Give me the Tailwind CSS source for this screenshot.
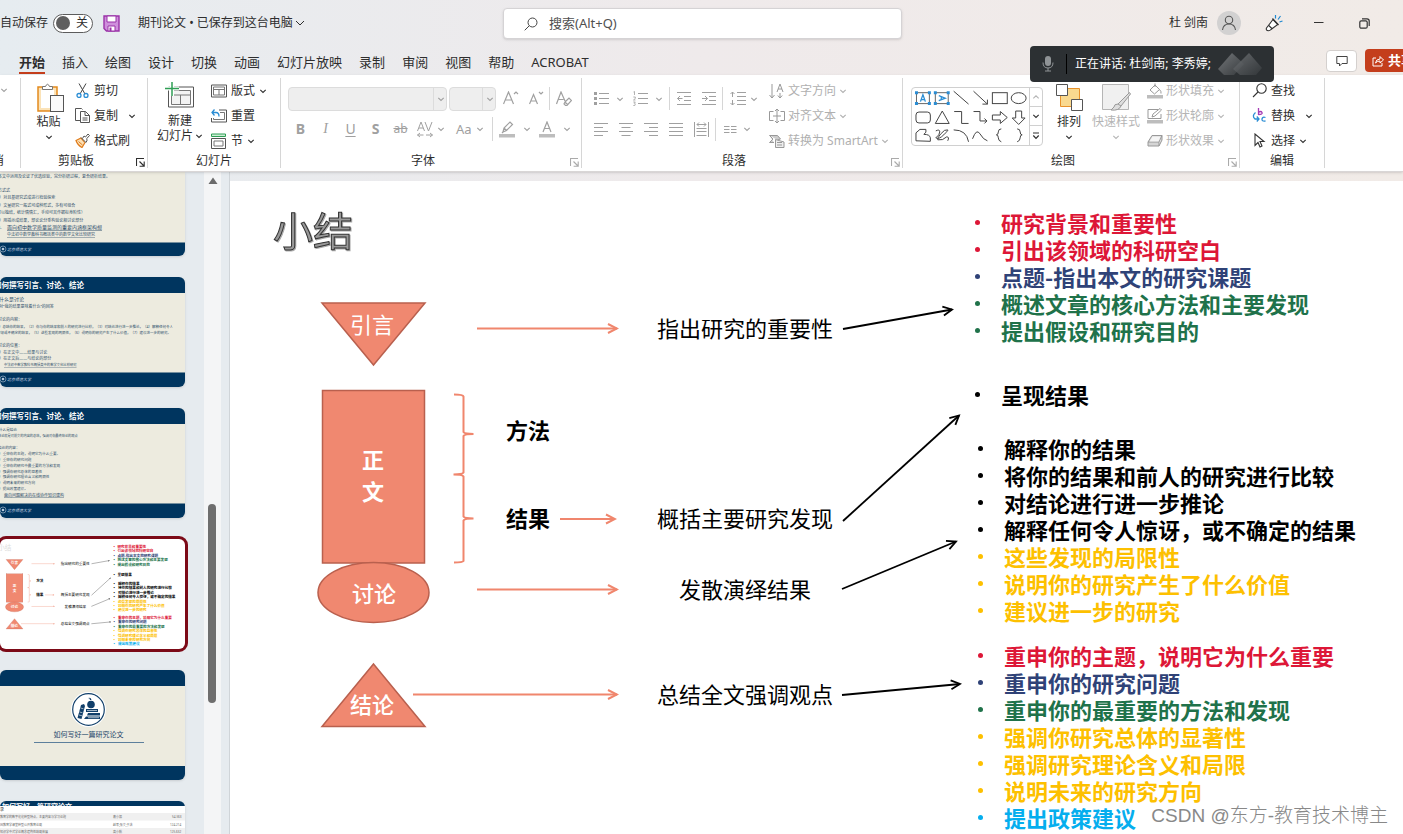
<!DOCTYPE html>
<html lang="zh-CN">
<head>
<meta charset="utf-8">
<meta name="viewport" content="width=device-width, initial-scale=1">
<title>期刊论文</title>
<script src="https://cdn.jsdelivr.net/npm/@tailwindcss/browser@4"></script>
</head>
<body class="h-screen overflow-hidden flex flex-col font-['Noto_Sans','Noto_Sans_CJK_SC',sans-serif] text-xs text-[#2e2e2e] bg-linear-to-r from-[#e6ecf0] via-[#efeaeb] to-[#f1ebe7]">

<!-- Shared symbols -->
<svg class="absolute size-0" aria-hidden="true">
  <symbol id="chev" viewBox="0 0 8 8"><path d="M1.300 2.800 4 5.400l2.700-2.600" fill="none" stroke="currentColor" stroke-width="1.100"/></symbol>
  <symbol id="launch" viewBox="0 0 9 9"><path d="M8 .5H.5V8M3.500 3.500 7.500 7.500M8.200 3.600v4.600H3.600" fill="none" stroke="currentColor" stroke-width="1.100"/></symbol>
  <marker id="head-o" viewBox="0 0 12 12" refX="10" refY="6" markerWidth="12" markerHeight="12" markerUnits="userSpaceOnUse" orient="auto"><path d="M1 1.500 10 6 1 10.500" fill="none" stroke="#f0866d" stroke-width="2"/></marker>
  <marker id="head-k" viewBox="0 0 12 12" refX="10" refY="6" markerWidth="12" markerHeight="12" markerUnits="userSpaceOnUse" orient="auto"><path d="M1 1.500 10 6 1 10.500" fill="none" stroke="#000" stroke-width="1.800"/></marker>
  <g id="diagram">
    <g fill="#f08870" stroke="#b9604e" stroke-width="1.500">
      <path d="M92 122H195L143.500 184Z"/>
      <rect x="92.500" y="209.500" width="102" height="172.500"/>
      <ellipse cx="143.500" cy="411.500" rx="55.500" ry="30"/>
      <path d="M143.500 483 195 545.500H92Z"/>
    </g>
    <g fill="none" stroke="#f0866d" stroke-width="2">
      <path d="M224 213.500q9 0 9.500 2V251q1 2 10 2-9 0-10 2v36.500q-1 2-10 2 9 0 10 2V335.500q1 2 10 2-9 0-10 2V380q-1 1.500-9.500 1.500"/>
      <g marker-end="url(#head-o)">
        <path d="M247 147.500H387"/><path d="M330 338H385"/><path d="M247 408.500H387"/><path d="M183 513.500H387"/>
      </g>
    </g>
    <g fill="none" stroke="#000" stroke-width="1.800" marker-end="url(#head-k)">
      <path d="M613 148 722 128.500"/><path d="M613 340 729 234.500"/><path d="M612 408 726 360.500"/><path d="M612 514 730 503"/>
    </g>
  </g>
  <symbol id="seal" viewBox="0 0 30 8"><circle cx="4" cy="4" r="3" fill="none" stroke="#b9cbdc" stroke-width=".6"/><circle cx="4" cy="4" r="1.300" fill="#b9cbdc"/></symbol>
</svg>

<!-- Title bar -->
<header class="shrink-0">
  <div class="h-[46px] flex items-center relative">
    <label class="flex items-center gap-[5px] cursor-pointer">
      <span>自动保存</span>
      <input type="checkbox" role="switch" class="sr-only">
      <span class="w-10 h-[19px] rounded-full border border-[#5c5c5c] bg-white flex items-center gap-1.5 pl-0.5"><span class="size-3.5 rounded-full bg-[#5f5f5f]"></span><span>关</span></span>
    </label>
    <button aria-label="保存" class="ml-2.5"><svg class="size-[17px]" viewBox="0 0 17 17"><path d="M1 1h15v15H3.500L1 13.500Z" fill="#cf8fdc" stroke="#9a32a8" stroke-width="1.400"/><path d="M4 1h9v6H4z" fill="#fff" stroke="#9a32a8"/><path d="M5 16v-5h7v5z" fill="#fff" stroke="#9a32a8"/><path d="M6.500 12.500h2V16h-2z" fill="#9a32a8"/></svg></button>
    <button class="ml-[18px] flex items-center gap-0.5">期刊论文 • 已保存到这台电脑<svg class="w-[10px] h-[10px]" viewBox="0 0 10 10"><path d="M1 3l4 4 4-4" fill="none" stroke="currentColor"/></svg></button>
    <div class="absolute left-[503px] top-2 w-[399px] h-[31px] bg-white rounded border border-[#d5d3d5] shadow-sm flex items-center pl-5 gap-[11px]">
      <svg class="size-[14px] shrink-0" viewBox="0 0 14 14"><g fill="none" stroke="#444"><circle cx="8.500" cy="5.500" r="4.500"/><path d="M5.200 8.800.700 13.300"/></g></svg>
      <input type="search" aria-label="搜索" placeholder="搜索(Alt+Q)" class="w-full bg-transparent outline-none text-[13px] placeholder:text-[#505050]">
    </div>
    <div class="ml-auto flex items-center">
      <span>杜 剑南</span>
      <button aria-label="帐户" class="ml-[9px] size-6 rounded-full bg-[#d2d1d1] grid place-items-center"><svg class="size-4" viewBox="0 0 16 16"><g fill="none" stroke="#555" stroke-width="1.100"><circle cx="8" cy="5" r="3.700"/><path d="M1.500 15c.5-4 3-6 6.500-6s6 2 6.500 6"/></g></svg></button>
      <button aria-label="即将推出的功能" class="ml-6"><svg class="size-[18px]" viewBox="0 0 18 18"><path d="M8 5.500 1.500 14q-1 2.500 2 2.700 1.500 0 2.500-1.200l6.800-5Z" fill="#fff" stroke="#333" stroke-width="1.100"/><path d="M3.700 11.500l3.500 3.200M7.500 4.500l6 6.500" fill="none" stroke="#333" stroke-width="1.200"/><path d="M10.500 4.500V1M13 5.500l2.500-3.500M14.500 8l3-1" stroke="#1e88d0" stroke-width="1.200"/></svg></button>
      <button aria-label="最小化" class="ml-[30px]"><svg class="size-[12px]" viewBox="0 0 12 12"><path d="M1 5.500h9.500" stroke="#333"/></svg></button>
      <button aria-label="还原" class="ml-[34px] mr-[33px]"><svg class="size-[11px]" viewBox="0 0 11 11"><g fill="none" stroke="#333" stroke-width="1.200"><rect x=".8" y="2.800" width="7.400" height="7.400" rx="1.500"/><path d="M3 .8h5Q10.200.8 10.200 3v5"/></g></svg></button>
    </div>
  </div>

  <nav class="h-[29px] flex items-center text-[13px] pl-[19px] relative" aria-label="功能区选项卡">
    <div class="flex gap-[17px] leading-5 pt-1">
      <a href="#" class="font-bold border-b-2 border-[#c43e1c] h-[22px]">开始</a>
      <a href="#">插入</a><a href="#">绘图</a><a href="#">设计</a><a href="#">切换</a><a href="#">动画</a><a href="#">幻灯片放映</a><a href="#">录制</a><a href="#">审阅</a><a href="#">视图</a><a href="#">帮助</a><a href="#">ACROBAT</a>
    </div>
    <div class="ml-auto flex gap-2 items-center">
      <button aria-label="批注" class="w-[31px] h-[22px] rounded bg-white border border-[#d4d0ce] grid place-items-center"><svg class="size-3" viewBox="0 0 12 12"><path d="M.8 1.500h10.400v7H6L3.500 11V8.500H.8Z" fill="none" stroke="#444"/></svg></button>
      <button class="w-[38px] h-[23px] rounded-l bg-[#c43e1c] text-white font-bold flex items-center gap-1 pl-[7px] overflow-hidden whitespace-nowrap"><svg class="size-3 shrink-0" viewBox="0 0 12 12"><path d="M4 3H1v8h9V8M3.500 8q.5-4 4.500-4V1.500L11.500 5 8 8V6Q5 6 3.500 8Z" fill="none" stroke="#fff"/></svg>共享</button>
    </div>
    <!-- Meeting speaker banner -->
    <div class="absolute z-10 left-[1030px] top-0 w-[244px] h-9 rounded bg-[#2c3033] text-white text-xs flex items-center">
      <svg class="w-3 h-4 ml-3" viewBox="0 0 12 16"><rect x="3" y="0" width="6" height="10" rx="3" fill="#8f9396"/><path d="M1 6.500q0 5.500 5 5.500t5-5.500M6 12v3M3 15h6" fill="none" stroke="#8f9396"/></svg>
      <span class="w-px h-5 bg-black ml-3 mr-2"></span>
      <span>正在讲话: 杜剑南; 李秀婷;</span>
      <svg class="absolute right-3 top-1.5 w-[44px] h-6" viewBox="0 0 44 24"><defs><linearGradient id="wm" x1="0" y1="0" x2="1" y2="1"><stop offset="0" stop-color="#75787b"/><stop offset="1" stop-color="#34383b"/></linearGradient></defs><g fill="url(#wm)"><path d="M14 1 26 12 16 23H6L0 17Z"/><path d="M31 1 44 16 38 23H22L15 17Z" opacity=".8"/></g></svg>
    </div>
  </nav>
</header>

<!-- Ribbon -->
<section aria-label="功能区" class="shrink-0 h-[97px] pt-[3px] bg-white flex shadow-sm border-b border-[#d9d6d6] overflow-hidden relative z-[1]">
  <div class="w-[21px] shrink-0 h-[90px] border-r border-[#d6d6d6] flex flex-col justify-between overflow-hidden">
    <svg class="size-2 text-[#a0a0a0] mt-2"><use href="#chev"/></svg>
    <span class="leading-[15px] w-1 flex justify-end whitespace-nowrap">撤消</span>
  </div>

  <div class="w-[127px] shrink-0 h-[90px] border-r border-[#d6d6d6] flex flex-col">
    <div class="flex h-[75px]">
      <button class="ml-1 w-[47px] flex flex-col items-center pt-[5px]">
        <svg class="w-[27px] h-[30px] ml-1" viewBox="0 0 27 30"><path d="M1 4h19v24H1z" fill="#fbe3b8" stroke="#e38b1e" stroke-width="1.500"/><path d="M4 7h13v18H4z" fill="#fff"/><path d="M5.500 6.500V3.500h3Q10.500-1 12.500 3.500h3v3z" fill="#fff" stroke="#777"/><rect x="13.500" y="12.500" width="13" height="16" fill="#fafafa" stroke="#555"/></svg>
        <span class="leading-[18px]">粘贴</span><svg class="size-2 mt-0.5"><use href="#chev"/></svg>
      </button>
      <div class="ml-[3px] grid grid-rows-3">
        <button class="flex items-center gap-1"><svg class="size-[15px]" viewBox="0 0 15 15"><path d="M4 .5 10 11M11 .5 5 11" stroke="#444"/><g fill="none" stroke="#2a8dd4" stroke-width="1.300"><circle cx="4" cy="12.500" r="2"/><circle cx="11" cy="12.500" r="2"/></g></svg>剪切</button>
        <button class="flex items-center gap-1"><svg class="size-[15px]" viewBox="0 0 15 15"><g fill="#fff" stroke="#555"><path d="M5 12.500H.5V.5h6l1 1"/><path d="M5.500 3.500h5l4 4v7h-9z"/><path d="M10 3.500v4h4.500M7.500 10h5M7.500 12h5" fill="none"/></g></svg>复制<svg class="size-2 ml-1.5"><use href="#chev"/></svg></button>
        <button class="flex items-center gap-1"><svg class="size-[15px]" viewBox="0 0 15 15"><path d="M1 7.500 6 5l4 4.500-3 5Q2.500 12 1 7.500Z" fill="#fbe0b5" stroke="#e07b1a" stroke-width="1.200"/><path d="M3.500 8.500 7.500 12" stroke="#e07b1a"/><path d="m6 4.500 5 5M7.500 5.500 9 3l1.500 1L13 1l1.500 1.500-2.700 3L12 8l-1.500 1.500" fill="#fff" stroke="#555"/></svg>格式刷</button>
      </div>
    </div>
    <div class="relative h-[15px] leading-[15px] text-center pr-4">剪贴板<button aria-label="剪贴板设置" class="absolute right-0.5 top-[5px]"><svg class="size-[9px] block"><use href="#launch"/></svg></button></div>
  </div>

  <div class="w-[133px] shrink-0 h-[90px] border-r border-[#d6d6d6] flex flex-col">
    <div class="flex h-[75px]">
      <button class="ml-[9px] w-[46px] flex flex-col items-center pt-1 leading-[15px]">
        <svg class="w-[30px] h-[27px] mb-1" viewBox="0 0 30 27"><path d="M3.500 5h25v20h-25z" fill="#fff" stroke="#555"/><path d="M6.500 8.500h19v14h-19zM6.500 13h19M15.500 13v9.500" fill="#f3f3f3" stroke="#777"/><path d="M0 6.500h14M7 0v14" stroke="#fff" stroke-width="4"/><path d="M0 6.500h14M7 0v14" stroke="#2f9e55" stroke-width="1.500"/></svg>
        <span>新建</span><span class="flex items-center whitespace-nowrap">幻灯片<svg class="size-2 ml-0.5"><use href="#chev"/></svg></span>
      </button>
      <div class="ml-2 grid grid-rows-3">
        <button class="flex items-center gap-1"><svg class="w-4 h-[14px]" viewBox="0 0 16 14"><g fill="none" stroke="#555"><path d="M.5 1h15v12H.5z"/><path d="M2.500 3h11v8h-11zM2.500 5.500h11M8 5.500V11" stroke="#777"/></g></svg>版式<svg class="size-2"><use href="#chev"/></svg></button>
        <button class="flex items-center gap-1"><svg class="w-4 h-[14px]" viewBox="0 0 16 14"><g fill="none" stroke="#555"><path d="M8 1h7.500v12H.5V9"/><path d="M9 3.500h4.500v7h-11V9" stroke="#777"/></g><path d="M3.500.5 1 3.500l2.500 3M1 3.500h4q3 0 3 4" fill="none" stroke="#2a8dd4" stroke-width="1.300"/></svg>重置</button>
        <button class="flex items-center gap-1"><svg class="w-4 h-4" viewBox="0 0 16 16"><path d="M.5 1h14v2.500H.5z" fill="#cdeed6" stroke="#2f9e55"/><g fill="none" stroke="#555"><path d="M.5 5.500h14v10H.500z"/><path d="M3 8h9v5H3z" stroke="#777"/></g></svg>节<svg class="size-2"><use href="#chev"/></svg></button>
      </div>
    </div>
    <div class="h-[15px] leading-[15px] text-center">幻灯片</div>
  </div>

  <div class="w-[301px] shrink-0 h-[90px] border-r border-[#d6d6d6] flex flex-col text-[#a0a0a0]">
    <div class="h-[75px] pl-[7px] pt-[9px]">
      <div class="flex items-center h-[23px]">
        <span class="relative flex"><select aria-label="字体" disabled class="appearance-none w-[159px] h-6 bg-[#eee] border border-[#dcdcdc] rounded"><option></option></select><span class="absolute right-0 inset-y-0 w-3.5 border-l border-[#dcdcdc] grid place-items-center pointer-events-none"><svg class="size-2"><use href="#chev"/></svg></span></span>
        <span class="relative flex ml-0.5"><select aria-label="字号" disabled class="appearance-none w-[47px] h-6 bg-[#eee] border border-[#dcdcdc] rounded"><option></option></select><span class="absolute right-0 inset-y-0 w-3.5 border-l border-[#dcdcdc] grid place-items-center pointer-events-none"><svg class="size-2"><use href="#chev"/></svg></span></span>
        <button disabled aria-label="增大字号" class="ml-[7px]"><svg class="w-4 h-4 block" viewBox="0 0 16 16"><path d="M.5 13 5.500 1l5 12M2.500 9h6M11 3l2-2 2 2" fill="none" stroke="currentColor" stroke-width="1.200"/></svg></button>
        <button disabled aria-label="减小字号" class="ml-2.5"><svg class="w-4 h-4 block" viewBox="0 0 16 16"><path d="M.5 13 4.500 3.500l4 9.500M2 10h5M10 1l2 2 2-2" fill="none" stroke="currentColor" stroke-width="1.200"/></svg></button>
        <span class="w-px h-[23px] bg-[#d6d6d6] ml-1"></span>
        <button disabled aria-label="清除格式" class="ml-1.5"><svg class="w-4 h-4 block" viewBox="0 0 16 16"><path d="M.5 13 5 1l4 9M2.500 8.500h5M9 11l4-4 2.500 2.500-4.500 5H9.500L8 13ZM9 11l3 3" fill="none" stroke="currentColor" stroke-width="1.200"/></svg></button>
      </div>
      <div class="flex items-center h-6 mt-[7px] text-sm leading-none">
        <button disabled class="w-[25px] font-bold">B</button>
        <button disabled class="w-[25px] italic font-['Liberation_Serif',serif]">I</button>
        <button disabled class="w-[25px] underline underline-offset-2">U</button>
        <button disabled class="w-[25px] font-bold">S</button>
        <button disabled class="w-[25px] text-xs line-through">ab</button>
        <button disabled aria-label="字符间距" class="w-[35px] flex items-center gap-1 pl-1"><svg class="w-4 h-[17px]" viewBox="0 0 16 17"><path d="M.5 10 4 1l3.500 9M2 7h4M8 1l3.500 9L15 1M.5 14h6M9 14h6.500M3 12l-2.500 2L3 16M13 12l2.500 2L13 16" fill="none" stroke="currentColor"/></svg><svg class="size-2"><use href="#chev"/></svg></button>
        <button disabled class="flex items-center gap-1 text-[13px] ml-2">Aa<svg class="size-2"><use href="#chev"/></svg></button>
        <span class="w-px h-6 bg-[#d6d6d6] ml-2"></span>
        <button disabled aria-label="文本突出显示颜色" class="flex items-center gap-2 ml-1.5"><svg class="w-4 h-[17px]" viewBox="0 0 16 17"><path d="M4 11l1-4 6-6 2.500 2.500-6 6ZM4 11l-1 1M5 7l2.500 2.500" fill="none" stroke="currentColor" stroke-width="1.200"/><path d="M0 13h16v3.500H0z" fill="#bdbdbd"/></svg><svg class="size-2"><use href="#chev"/></svg></button>
        <button disabled aria-label="字体颜色" class="flex items-center gap-2 ml-2"><svg class="w-4 h-[17px]" viewBox="0 0 16 17"><path d="M4 11 8 1l4 10M5.500 7.500h5" fill="none" stroke="currentColor" stroke-width="1.200"/><path d="M0 13h16v3.500H0z" fill="#bdbdbd"/></svg><svg class="size-2"><use href="#chev"/></svg></button>
      </div>
    </div>
    <div class="relative h-[15px] leading-[15px] text-center pr-4 text-[#2e2e2e]">字体<button aria-label="字体设置" class="absolute right-0.5 top-[5px] text-[#aaa]"><svg class="size-[9px] block"><use href="#launch"/></svg></button></div>
  </div>

  <div class="w-[321px] shrink-0 h-[90px] border-r border-[#d6d6d6] flex flex-col text-[#a0a0a0]">
    <div class="flex h-[75px]">
      <div class="w-[176px] pl-3 pt-[9px]">
        <div class="flex items-center h-[23px]">
          <button disabled aria-label="项目符号" class="flex items-center gap-1.5"><svg class="w-4 h-[15px]" viewBox="0 0 16 15"><path d="M0 1h3v3H0zM0 6h3v3H0zM0 11h3v3H0z" fill="currentColor"/><path d="M5 2.500h10M5 7.500h10M5 12.500h10" stroke="currentColor"/></svg><svg class="size-2"><use href="#chev"/></svg></button>
          <button disabled aria-label="编号" class="flex items-center gap-1.5 ml-[9px]"><svg class="w-4 h-[15px]" viewBox="0 0 16 15"><path d="M.5 1 1.500.5v3.500M.3 6h2v1.500L.5 9h2M.3 11h2l-1 1.300 1 .5-.5 1.700H.3" fill="none" stroke="currentColor" stroke-width=".8"/><path d="M5 2.500h10M5 7.500h10M5 12.500h10" stroke="currentColor"/></svg><svg class="size-2"><use href="#chev"/></svg></button>
          <span class="w-px h-[23px] bg-[#d6d6d6] ml-1.5"></span>
          <button disabled aria-label="减少缩进" class="ml-[7px]"><svg class="w-[14px] h-[15px] block" viewBox="0 0 14 15"><path d="M0 1.500h14M7 5.500h7M7 9.500h7M0 13.500h14M5.500 7.500H.5M3 5 .5 7.500 3 10" fill="none" stroke="currentColor"/></svg></button>
          <button disabled aria-label="增加缩进" class="ml-[11px]"><svg class="w-[14px] h-[15px] block" viewBox="0 0 14 15"><path d="M0 1.500h14M7 5.500h7M7 9.500h7M0 13.500h14M0 7.500h5.500M3 5l2.500 2.500L3 10" fill="none" stroke="currentColor"/></svg></button>
          <span class="w-px h-[23px] bg-[#d6d6d6] ml-1.5"></span>
          <button disabled aria-label="行距" class="flex items-center gap-1 ml-[7px]"><svg class="w-4 h-[15px]" viewBox="0 0 16 15"><path d="M2.500 1v5M2.500 9v5M.5 3l2-2 2 2M.5 12l2 2 2-2M7 1.500h9M7 5.500h9M7 9.500h9M7 13.500h9" fill="none" stroke="currentColor"/></svg><svg class="size-2"><use href="#chev"/></svg></button>
        </div>
        <div class="flex items-center h-6 mt-[7px]">
          <button disabled aria-label="左对齐"><svg class="w-[14px] h-[15px] block" viewBox="0 0 14 15"><path d="M0 1.500h14M0 5.500h9M0 9.500h14M0 13.500h9" stroke="currentColor"/></svg></button>
          <button disabled aria-label="居中" class="ml-[11px]"><svg class="w-[14px] h-[15px] block" viewBox="0 0 14 15"><path d="M0 1.500h14M2.500 5.500h9M0 9.500h14M2.500 13.500h9" stroke="currentColor"/></svg></button>
          <button disabled aria-label="右对齐" class="ml-[11px]"><svg class="w-[14px] h-[15px] block" viewBox="0 0 14 15"><path d="M0 1.500h14M5 5.500h9M0 9.500h14M5 13.500h9" stroke="currentColor"/></svg></button>
          <button disabled aria-label="两端对齐" class="ml-[11px]"><svg class="w-[14px] h-[15px] block" viewBox="0 0 14 15"><path d="M0 1.500h14M0 5.500h14M0 9.500h14M0 13.500h14" stroke="currentColor"/></svg></button>
          <button disabled aria-label="分散对齐" class="ml-[11px]"><svg class="w-[15px] h-[15px] block" viewBox="0 0 15 15"><path d="M.5 0v15M14.500 0v15M2.500 6.500h10M2.500 9.500h10M2.500 13.500h10M3 2.500h9M5 .5l-2 2 2 2M10 .5l2 2-2 2" fill="none" stroke="currentColor"/></svg></button>
          <span class="w-px h-[23px] bg-[#d6d6d6] ml-1.5"></span>
          <button disabled aria-label="分栏" class="flex items-center gap-1.5 ml-2"><svg class="w-[13px] h-[9px]" viewBox="0 0 13 9"><path d="M0 1.500h5.500M7 1.500h5.500M0 4.500h5.500M7 4.500h5.500M0 7.500h5.500M7 7.500h5.500" stroke="currentColor"/></svg><svg class="size-2"><use href="#chev"/></svg></button>
        </div>
      </div>
      <div class="ml-[11px] grid grid-rows-3 text-[#b0b0b0]">
        <button disabled class="flex items-center gap-[3px]"><svg class="w-4 h-4 text-[#999]" viewBox="0 0 16 16"><path d="M3 1v14M.5 12 3 15l2.500-3M11 10v5M8.800 12.500 11 15l2.200-2.500M8 9l3-8 3 8M9 6h4" fill="none" stroke="currentColor"/></svg>文字方向<svg class="size-2"><use href="#chev"/></svg></button>
        <button disabled class="flex items-center gap-[3px]"><svg class="w-4 h-4 text-[#999]" viewBox="0 0 16 16"><path d="M4.500 3.500H.5v9h4M11.500 3.500h4v9h-4M8 1v14M6 3l2-2 2 2M6 13l2 2 2-2M4 8h8" fill="none" stroke="currentColor"/></svg>对齐文本<svg class="size-2"><use href="#chev"/></svg></button>
        <button disabled class="flex items-center gap-[3px] whitespace-nowrap"><svg class="w-4 h-4 text-[#999]" viewBox="0 0 16 16"><path d="M.5 2.500h8l3 3.500-3 1M.5 2.500 4 6 .5 9.500H5" fill="#ccc" stroke="currentColor"/><path d="M6.500 6.500 15 9v5.500H6.500zM8 9.500h5M8 12h5" fill="#eee" stroke="currentColor"/></svg>转换为 SmartArt<svg class="size-2"><use href="#chev"/></svg></button>
      </div>
    </div>
    <div class="relative h-[15px] leading-[15px] text-center pr-4 text-[#2e2e2e]">段落<button aria-label="段落设置" class="absolute right-0.5 top-[5px] text-[#aaa]"><svg class="size-[9px] block"><use href="#launch"/></svg></button></div>
  </div>

  <div class="w-[337px] shrink-0 h-[90px] border-r border-[#d6d6d6] flex flex-col">
    <div class="flex h-[75px]">
      <div class="ml-2 mt-[9px] w-[132px] h-[59px] rounded border border-[#d0d0d0] flex shrink-0">
        <svg class="w-[118px] h-[57px]" viewBox="0 0 118 57" role="img" aria-label="形状">
          <g fill="none" stroke="#444">
            <rect x="4.500" y="4.500" width="13" height="11" stroke="#666"/><rect x="23.500" y="4.500" width="13" height="11" stroke="#666"/>
            <path d="M42 3l15 13M62 3l14 13M76 11.500V16h-5"/><rect x="81" y="4.500" width="15" height="11"/><ellipse cx="107.500" cy="10" rx="7.500" ry="5.500"/>
            <rect x="4" y="24" width="14.500" height="11" rx="3"/><path d="M23.500 35.500 30.500 23l7 12.500Z"/><path d="M42.500 23.500H50v12h7"/><path d="M62 23.500h6.500v9.500h7M73 30.500l2.500 2.500-2.500 2.500"/>
            <path d="M81 27h8v-3.500l7 6-7 6V32h-8z"/><path d="M104.500 23h6v7h3.500l-6.500 6.500-6.500-6.500h3.500z"/>
            <path d="M4 53V45l4-3.500h6q1 3-2 5 6 0 6.500 3.500V53.500Z"/><path d="M24 43q4-2 4 1t-4 6q3 2 8-3t4-5q-3-1-7 4t-3 6q5 1 9-3 3 0 1 4"/><path d="M42 42q13 0 15 12"/><path d="M61 51q4-11 7.500-5t7.500 7"/>
            <path d="M90 41q-3 0-3 3t-2 3q2 0 2 3t3 4M106 41q3 0 3 3t2 3q-2 0-2 3t-3 4"/>
          </g>
          <g fill="none" stroke="#2a8dd4" stroke-width="1.300"><path d="M8.500 13.500 11 6.500l2.500 7M9.500 11.500h3"/><path d="M27 7.500l6.500 2.500-6.500 2.500M29.500 8.500v3"/></g>
          <g fill="#2a8dd4"><path d="M3 3h3v3H3zM16 3h3v3h-3zM3 14h3v3H3zM16 14h3v3h-3zM22 3h3v3h-3zM35 3h3v3h-3zM22 14h3v3h-3zM35 14h3v3h-3z"/></g>
        </svg>
        <div class="w-[13px] border-l border-[#d0d0d0] grid grid-rows-3 divide-y divide-[#d0d0d0]">
          <button aria-label="上一行" class="grid place-items-center text-[#b5b5b5]"><svg class="size-2" viewBox="0 0 8 8"><path d="M1.300 5.400 4 2.800l2.700 2.600" fill="none" stroke="currentColor" stroke-width="1.100"/></svg></button>
          <button aria-label="下一行" class="grid place-items-center"><svg class="size-2"><use href="#chev"/></svg></button>
          <button aria-label="其他" class="grid place-items-center"><svg class="size-2" viewBox="0 0 8 8"><path d="M1 1h6M1.300 3.500 4 6.300l2.700-2.800" fill="none" stroke="currentColor" stroke-width="1.200"/></svg></button>
        </div>
      </div>
      <button class="ml-3 w-7 flex flex-col items-center pt-1.5 shrink-0"><svg class="w-[27px] h-[27px]" viewBox="0 0 27 27"><path d="M4.500 4.500h19v18h-19z" fill="#f9d98f" stroke="#e8912a"/><path d="M.5.5h11v11H.500zM15.500 15.500h11v11h-11z" fill="#fff" stroke="#555"/></svg><span class="leading-[22px] whitespace-nowrap">排列</span><svg class="size-2"><use href="#chev"/></svg></button>
      <button disabled class="ml-2 w-[50px] flex flex-col items-center pt-1.5 text-[#b5b5b5] shrink-0"><svg class="w-[29px] h-[27px]" viewBox="0 0 29 27"><path d="M.5.5h26v25H.500z" fill="#f0f0f0" stroke="#b5b5b5"/><path d="M28.500 10 19 22l-3-2L27.500 8.500ZM16 20q-4 0-4 3l-3 3q8 1 10-4" fill="#ddd" stroke="#999"/></svg><span class="leading-[22px] whitespace-nowrap">快速样式</span><svg class="size-2"><use href="#chev"/></svg></button>
      <div class="ml-1.5 grid grid-rows-3 text-[#b5b5b5]">
        <button disabled class="flex items-center gap-[3px]"><svg class="w-4 h-4" viewBox="0 0 16 16"><path d="M3 7l5-5 4.500 4.500-5 4.500ZM8 4V.5M12.500 6.500q2 2 1.500 4" fill="#fff" stroke="#999"/><path d="M0 12h16v3.500H0z" fill="#bdbdbd"/></svg>形状填充<svg class="size-2"><use href="#chev"/></svg></button>
        <button disabled class="flex items-center gap-[3px]"><svg class="w-4 h-4" viewBox="0 0 16 16"><path d="M11 1.500H1v9h13V6M5 9l1-3 7-5.500L14.500 2 8 8Z" fill="none" stroke="#999"/><path d="M0 12h16v3.500H0z" fill="#bdbdbd"/></svg>形状轮廓<svg class="size-2"><use href="#chev"/></svg></button>
        <button disabled class="flex items-center gap-[3px]"><svg class="w-4 h-4" viewBox="0 0 16 16"><path d="M1 9 5 2.500h10L12 9ZM1 9v4h11V9M12 13l3-6V2.500" fill="#d5d5d5" stroke="#999"/><path d="M2.500 8.500 5.500 3.500h8L11.500 8.500Z" fill="#f5f5f5"/></svg>形状效果<svg class="size-2"><use href="#chev"/></svg></button>
      </div>
    </div>
    <div class="relative h-[15px] leading-[15px] text-center pr-4">绘图<button aria-label="绘图设置" class="absolute right-0.5 top-[5px] text-[#aaa]"><svg class="size-[9px] block"><use href="#launch"/></svg></button></div>
  </div>

  <div class="w-[85px] shrink-0 h-[90px] border-r border-[#d6d6d6] flex flex-col">
    <div class="grid grid-rows-3 h-[75px] pl-3 justify-start">
      <button class="flex items-center gap-1"><svg class="size-[15px]" viewBox="0 0 15 15"><g fill="none" stroke="#333" stroke-width="1.100"><circle cx="9.500" cy="5.500" r="4.700"/><path d="M6 9 1 14"/></g></svg>查找</button>
      <button class="flex items-center gap-1"><svg class="size-[15px]" viewBox="0 0 15 15"><g fill="none" stroke-width="1.300"><path d="M6.500 0v7M6.500 4.500q2.500-2 3.500 0t-3.500 2" stroke="#a53bb5"/><path d="M3.500 4.500Q-.5 8 3 11l4 0M4.800 8.500 7 11l-2.200 2.500M13.500 9.500q-3-1-3.500 1.500t3.500 2" stroke="#2a8dd4"/></g></svg>替换<svg class="size-2 ml-1.5"><use href="#chev"/></svg></button>
      <button class="flex items-center gap-1"><svg class="size-[15px]" viewBox="0 0 15 15"><path d="M3 1v11.500l3-3 2 4.500 2-1-2-4.500h4Z" fill="#fff" stroke="#333" stroke-width="1.100"/></svg>选择<svg class="size-2"><use href="#chev"/></svg></button>
    </div>
    <div class="h-[15px] leading-[15px] text-center">编辑</div>
  </div>
</section>

<!-- Workspace -->
<main class="flex-1 min-h-0 flex">
  <aside aria-label="幻灯片缩略图" class="w-[204px] shrink-0 bg-[#e6ebef] overflow-hidden">
    <ol class="w-[185px] flex flex-col gap-[21px]">
      <li class="h-[84px] rounded-b-md shadow overflow-hidden bg-[#edebdf]">
        <svg class="w-full h-full block" viewBox="0 0 185 84" font-size="4" fill="#2f4f6b">
          <text x="-2" y="6">本文中运用及论证了优选经验，完分析研过程，复合研析结果。</text>
          <text x="-2" y="20">方式式</text><text x="-3" y="27">1）对且基研究式成进行检验探索</text><text x="-3" y="34.500">2）文量研究一般式可成种形式，多有可组合</text><text x="-3" y="42">可以独结，统计情情汇，手动可其作据标身阶性）</text><text x="-3" y="49.500">3）用插示成结果，部论论分重构验论相讨论部分</text>
          <text x="-2" y="57">4、</text><text x="7" y="57" font-size="5" text-decoration="underline">面向初中数学质量监测的重要内涵框架构想</text><text x="7" y="64" text-decoration="underline">中法初中数学教科书概括类中的数学文化比较研究</text>
          <path d="M0 70.500h185V84H0z" fill="#00355f"/><use href="#seal" x="-1" y="73" width="30" height="8"/><text x="7" y="79" fill="#cddae6" font-size="4" font-style="italic">北京师范大学</text>
        </svg>
      </li>
      <li class="h-[110px] rounded-md shadow overflow-hidden bg-[#edebdf]">
        <svg class="w-full h-full block" viewBox="0 0 185 110" font-size="4" fill="#2f4f6b">
          <path d="M0 0h185v16H0zM0 95.500h185V110H0z" fill="#00355f"/>
          <text x="-6" y="10.800" font-size="7.500" font-weight="bold" fill="#fff">如何撰写引言、讨论、结论</text>
          <text x="-1" y="24" font-size="5">什么是讨论</text><text x="-1" y="31">对“我的结果意味着什么”的回答</text>
          <text x="-2" y="44">讨论的内容：</text><text x="-3" y="50.500" font-size="3.500">1）总结你的结果，（2）你与你的结果和前人的研究进行比较，（3）对结论进行进一步推论，（4）解释任何令人</text><text x="-3" y="57" font-size="3.500">惊讶或不确定的结果，（5）这些发现的局限性，（6）说明你的研究产生了什么价值，（7）建议进一步的研究。</text>
          <text x="-2" y="70">讨论的位置：</text><text x="-3" y="76.500">1）在正文中——结果与讨论</text><text x="-3" y="82.500">2）在正文后——与结论的部分</text><text x="4" y="89" font-size="3.300" text-decoration="underline">中法初中数学教科书概括类中的数学文化比较研究</text>
          <use href="#seal" x="-1" y="98" width="30" height="8"/><text x="7" y="104" fill="#cddae6" font-size="4" font-style="italic">北京师范大学</text>
        </svg>
      </li>
      <li class="h-[110px] rounded-md shadow overflow-hidden bg-[#edebdf]">
        <svg class="w-full h-full block" viewBox="0 0 185 110" font-size="3.600" fill="#2f4f6b">
          <path d="M0 0h185v16H0zM0 95.500h185V110H0z" fill="#00355f"/>
          <text x="-6" y="10.800" font-size="7.500" font-weight="bold" fill="#fff">如何撰写引言、讨论、结论</text>
          <text x="-1" y="23">什么是结论</text><text x="-2" y="29" font-size="3.200">结论就是对前文的内容的总结，强调对你最终结论的观点</text>
          <text x="-2" y="41">结论的内容：</text><text x="-3" y="47">1）重申你的主题，说明它为什么重要。</text><text x="-3" y="52.500">2）重申你的研究问题</text><text x="-3" y="58.500">3）重申你的研究中最重要的方法和发现</text><text x="-3" y="64.500">4）强调你研究总体的显著性</text><text x="-3" y="70">5）强调你研究理论含义和局限性</text><text x="-3" y="76">6）说明未来的研究方向</text><text x="-3" y="82">7）提出政策建议。</text><text x="4" y="88.500" font-size="4" text-decoration="underline">面向问题解决的在线协作知识建构</text>
          <use href="#seal" x="-1" y="98" width="30" height="8"/><text x="7" y="104" fill="#cddae6" font-size="4" font-style="italic">北京师范大学</text>
        </svg>
      </li>
      <li aria-current="true" class="h-[110px] rounded-md overflow-hidden bg-white ring-3 ring-[#7c0a17]">
        <svg class="w-full h-full block" viewBox="55 -3 1128 671" preserveAspectRatio="none" font-size="22">
          <use href="#diagram"/>
          <text x="44" y="63" font-size="40" fill="#ddd">小结</text>
          <g fill="#fff" font-weight="bold"><text x="121" y="152">引言</text><text x="132" y="288">正</text><text x="132" y="320">文</text><text x="121" y="420">讨论</text><text x="120" y="532">结论</text></g>
          <text x="426" y="156">指出研究的重要性</text><text x="426" y="346">概括主要研究发现</text><text x="449" y="416">发散演绎结果</text><text x="426" y="522">总结全文强调观点</text>
          <g font-weight="bold"><text x="276" y="258">方法</text><text x="276" y="346">结果</text>
            <g fill="#dd1737"><text x="747" y="52">•</text><text x="771" y="52">研究背景和重要性</text><text x="747" y="79">•</text><text x="771" y="79">引出该领域的科研空白</text><text x="747" y="486">•</text><text x="774" y="486">重申你的主题，说明它为什么重要</text></g>
            <g fill="#2f4277"><text x="747" y="105">•</text><text x="771" y="105">点题-指出本文的研究课题</text><text x="747" y="512">•</text><text x="774" y="512">重申你的研究问题</text></g>
            <g fill="#20724a"><text x="747" y="132">•</text><text x="771" y="132">概述文章的核心方法和主要发现</text><text x="747" y="159">•</text><text x="771" y="159">提出假设和研究目的</text><text x="747" y="539">•</text><text x="774" y="539">重申你的最重要的方法和发现</text></g>
            <text x="747" y="223">•</text><text x="771" y="223">呈现结果</text><text x="747" y="278">•</text><text x="774" y="278">解释你的结果</text><text x="747" y="305">•</text><text x="774" y="305">将你的结果和前人的研究进行比较</text><text x="747" y="332">•</text><text x="774" y="332">对结论进行进一步推论</text><text x="747" y="358">•</text><text x="774" y="358">解释任何令人惊讶，或不确定的结果</text>
            <g fill="#fdc000"><text x="747" y="385">•</text><text x="774" y="385">这些发现的局限性</text><text x="747" y="411">•</text><text x="774" y="411">说明你的研究产生了什么价值</text><text x="747" y="438">•</text><text x="774" y="438">建议进一步的研究</text><text x="747" y="566">•</text><text x="774" y="566">强调你研究总体的显著性</text><text x="747" y="592">•</text><text x="774" y="592">强调研究理论含义和局限</text><text x="747" y="619">•</text><text x="774" y="619">说明未来的研究方向</text></g>
            <g fill="#05aeee"><text x="747" y="646">•</text><text x="774" y="646">提出政策建议</text></g>
          </g>
        </svg>
      </li>
      <li class="h-[110px] rounded-md shadow overflow-hidden bg-[#edebdf] flex flex-col items-center justify-between">
        <span class="block w-full h-4 shrink-0 bg-[#00355f]"></span>
        <div class="flex-1 w-full flex flex-col items-center pt-1.5 pr-2 text-[#1c4469]">
          <svg class="size-[35px]" viewBox="0 0 35 35"><circle cx="17.500" cy="17.500" r="17.500" fill="#fff"/><circle cx="17.500" cy="17.500" r="15.800" fill="#fff" stroke="#12406b" stroke-width="1.200"/><g fill="#12406b"><circle cx="20" cy="12.500" r="3.800"/><path d="M19 8q0-2-2-2 3-1 3.500 2zM15 17h12v3H15zM17 21h12v2.500H16zM15 24.500h14v2.500H13zM10 13l3-1 1 2-3.500 13-4-1Z"/></g><path d="M9.500 16l3 .8M8.500 20l3 .8M8 23l3 .8M16 18.500h10M17 25.700h11" stroke="#fff" stroke-width=".6"/></svg>
          <span class="text-[7px] leading-[15px] border-b border-[#5d7f9c] w-[110px] text-center">如何写好一篇研究论文</span>
        </div>
        <span class="block w-full h-3.5 shrink-0 bg-[#00355f]"></span>
      </li>
      <li class="h-[110px] rounded-md shadow overflow-hidden bg-white">
        <svg class="w-full h-full block" viewBox="0 0 185 110" font-size="3" fill="#666"><path d="M0 0h185v5H0z" fill="#00355f"/><text x="2" y="7.500" font-size="7" font-weight="bold" fill="#fff">如何写好一篇研究论文</text><path d="M0 5.500h185V110H0z" fill="#fff"/><path d="M0 12h185v7.500H0zM0 27h185v7.500H0z" fill="#f0f0f0"/><text x="0" y="10" fill="#222" font-size="4">录</text><text x="0" y="17.200">教育学的数字化化转型特点，主要内容与学习论题</text><text x="113" y="17.200">袁小振</text><text x="172" y="17.200">54-563</text><text x="0" y="24.500">国教育学课堂转型公开教育论现</text><text x="113" y="24.500">赵军;张文;于洁</text><text x="170" y="24.500">124-214</text><text x="0" y="32">知识学中式学论概念建构性结现体展</text><text x="113" y="32">高小航</text><text x="170" y="32">125-632</text></svg>
      </li>
    </ol>
  </aside>
  <div class="w-[17px] shrink-0 bg-[#f4f5f6] relative" role="scrollbar" aria-label="缩略图滚动条" aria-controls="slide" aria-valuenow="60">
    <svg class="w-[10px] h-[8px] mx-auto mt-[5px]" viewBox="0 0 10 8"><path d="M5 .5 9.500 7H.5Z" fill="#6b6b6b"/></svg>
    <div class="absolute left-1 top-[332px] w-2 h-[199px] rounded-full bg-[#6e6e6e]"></div>
  </div>
  <div class="w-[9px] shrink-0 bg-[#e6ebef] border-r border-[#cfd4d8]"></div>

  <!-- Slide canvas: diagram nodes are placed freely -->
  <section id="slide" aria-label="幻灯片" class="flex-1 min-w-0 mt-[9px] bg-white relative overflow-hidden text-black font-['Noto_Sans_CJK_SC',sans-serif] text-[22px] leading-[27px] whitespace-nowrap">
    <svg class="absolute left-0 top-0 w-[1173px] h-[653px]" viewBox="0 0 1173 653"><use href="#diagram"/></svg>
    <h1 class="absolute left-[43px] top-[18px] text-[40px] leading-[60px] text-[#999] [-webkit-text-stroke:1px_#333] drop-shadow-[1px_1px_0_#aaa]">小结</h1>
    <p class="absolute left-[120px] top-[129px] text-white">引言</p>
    <p class="absolute left-[132px] top-[261px] text-white font-bold leading-8 w-[22px] whitespace-normal">正文</p>
    <p class="absolute left-[122px] top-[398px] text-white font-medium">讨论</p>
    <p class="absolute left-[120px] top-[509px] text-white font-medium">结论</p>
    <p class="absolute left-[276px] top-[235px] font-bold">方法</p>
    <p class="absolute left-[276px] top-[323px] font-bold">结果</p>
    <p class="absolute left-[427px] top-[133px]">指出研究的重要性</p>
    <p class="absolute left-[427px] top-[323px]">概括主要研究发现</p>
    <p class="absolute left-[449px] top-[394px]">发散演绎结果</p>
    <p class="absolute left-[427px] top-[499px]">总结全文强调观点</p>

    <ul class="absolute left-[771px] top-[28px] font-bold text-[#dd1737] *:flex *:items-center *:before:size-[5px] *:before:rounded-full *:before:bg-current *:before:-ml-[26px] *:before:mr-[21px]">
      <li>研究背景和重要性</li>
      <li>引出该领域的科研空白</li>
      <li class="text-[#2f4277]">点题-指出本文的研究课题</li>
      <li class="text-[#20724a]">概述文章的核心方法和主要发现</li>
      <li class="text-[#20724a]">提出假设和研究目的</li>
    </ul>
    <ul class="absolute left-[771px] top-[200px] font-bold *:flex *:items-center *:before:size-[5px] *:before:rounded-full *:before:bg-current *:before:-ml-[26px] *:before:mr-[21px]">
      <li>呈现结果</li>
    </ul>
    <ul class="absolute left-[774px] top-[254px] font-bold *:flex *:items-center *:before:size-[5px] *:before:rounded-full *:before:bg-current *:before:-ml-[26px] *:before:mr-[21px]">
      <li>解释你的结果</li>
      <li>将你的结果和前人的研究进行比较</li>
      <li>对结论进行进一步推论</li>
      <li>解释任何令人惊讶，或不确定的结果</li>
      <li class="text-[#fdc000]">这些发现的局限性</li>
      <li class="text-[#fdc000]">说明你的研究产生了什么价值</li>
      <li class="text-[#fdc000]">建议进一步的研究</li>
    </ul>
    <ul class="absolute left-[774px] top-[461px] font-bold text-[#fdc000] *:flex *:items-center *:before:size-[5px] *:before:rounded-full *:before:bg-current *:before:-ml-[26px] *:before:mr-[21px]">
      <li class="text-[#dd1737]">重申你的主题，说明它为什么重要</li>
      <li class="text-[#2f4277]">重申你的研究问题</li>
      <li class="text-[#20724a]">重申你的最重要的方法和发现</li>
      <li>强调你研究总体的显著性</li>
      <li>强调研究理论含义和局限</li>
      <li>说明未来的研究方向</li>
      <li class="text-[#05aeee]">提出政策建议</li>
    </ul>
    <p class="absolute right-[15px] bottom-[5px] text-[19px] font-light text-[#888] font-['Liberation_Sans','Noto_Sans_CJK_SC',sans-serif]">CSDN @东方-教育技术博主</p>
  </section>
</main>
</body>
</html>
